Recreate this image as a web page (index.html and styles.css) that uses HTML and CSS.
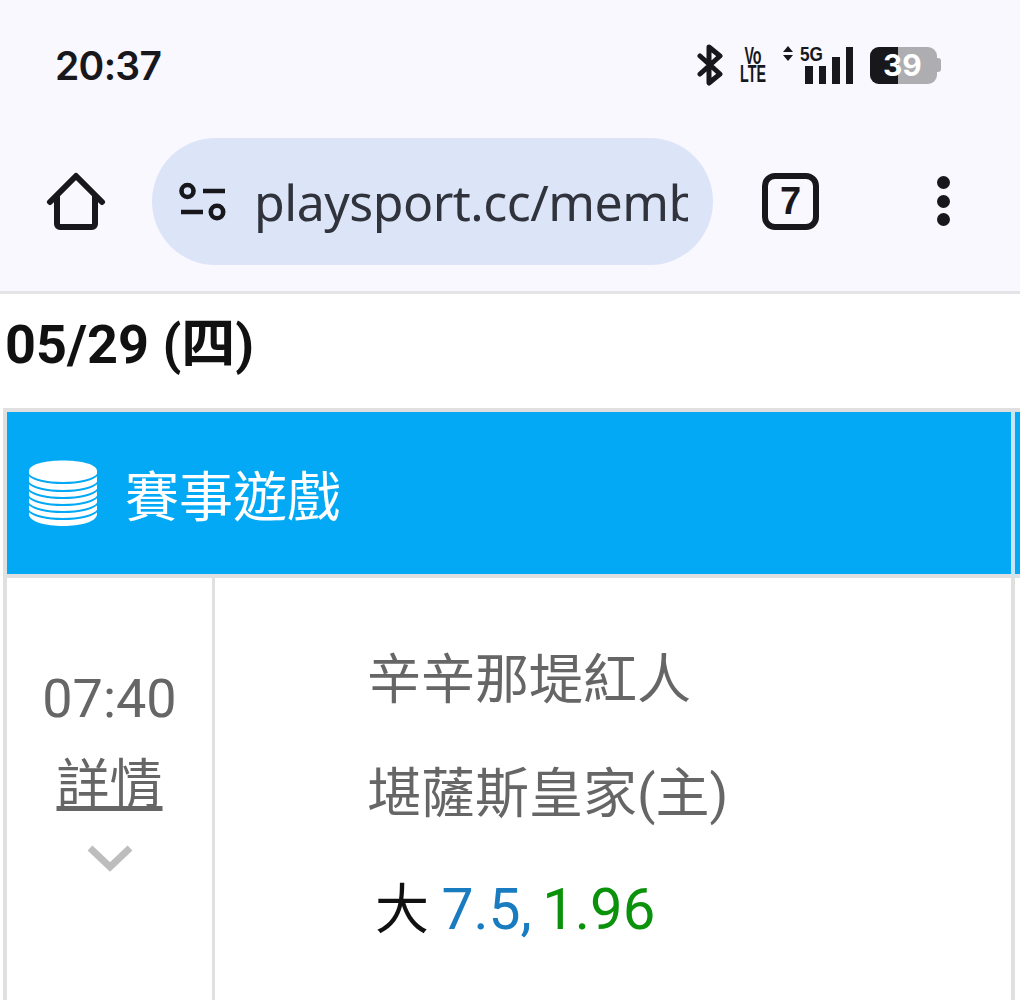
FILE: index.html
```html
<!DOCTYPE html>
<html lang="zh-Hant">
<head>
    <meta charset="UTF-8">
    <meta name="viewport" content="width=device-width, initial-scale=1.0">
    <title>playsport.cc</title>
    <link rel="stylesheet" href="styles.css">
</head>
<body>
    <div class="status-bar">
        <div class="clock">20:37</div>
        <div class="status-icons">
            <svg class="bt-icon" width="26" height="42" viewBox="0 0 26 42">
                <path d="M3 12 L23 30 L12 39 L12 3 L23 12 L3 30" fill="none" stroke="#17171c" stroke-width="5" stroke-linejoin="round" stroke-linecap="round"/>
            </svg>
            <div class="volte"><span>Vo</span><span>LTE</span></div>
            <div class="signal">
                <svg class="arrows" width="12" height="16" viewBox="0 0 12 16">
                    <path d="M6 0 L11 6 L1 6 Z M1 9 L11 9 L6 15 Z" fill="#17171c"/>
                </svg>
                <span class="five-g">5G</span>
                <div class="bars">
                    <i class="bar bar-1"></i>
                    <i class="bar bar-2"></i>
                    <i class="bar bar-3"></i>
                    <i class="bar bar-4"></i>
                </div>
            </div>
            <div class="battery">
                <div class="battery-body">
                    <div class="battery-fill"></div>
                    <span class="battery-text">39</span>
                </div>
                <div class="battery-tip"></div>
            </div>
        </div>
    </div>

    <div class="toolbar">
        <svg class="home-icon" width="60" height="60" viewBox="0 0 60 60">
            <path d="M4 31 L30 5 L56 31 M11 26 V53 a3 3 0 0 0 3 3 H46 a3 3 0 0 0 3 -3 V26" fill="none" stroke="#17171c" stroke-width="6" stroke-linejoin="round" stroke-linecap="round"/>
        </svg>
        <div class="url-pill">
            <svg class="tune-icon" width="48" height="40" viewBox="0 0 48 40">
                <circle cx="8.5" cy="9" r="6" fill="none" stroke="#17171c" stroke-width="4.6"/>
                <path d="M24 9 H46 M2 30 H24" stroke="#17171c" stroke-width="4.4"/>
                <circle cx="38" cy="30" r="6.2" fill="none" stroke="#17171c" stroke-width="4.6"/>
            </svg>
            <div class="url-text">playsport.cc/member</div>
        </div>
        <div class="tab-count">7</div>
        <div class="more-dots"><i></i><i></i><i></i></div>
    </div>

    <h1 class="date-title">05/29 (四)</h1>

    <div class="game-wrap">
        <div class="game-table">
            <div class="game-header">
                <svg class="coins-icon" width="70" height="66" viewBox="0 0 70 66">
                    <path d="M1 11 C1 -3 69 -3 69 11 V54 C69 70 1 70 1 54 Z" fill="#fff"/>
                    <path d="M0 14 C8 26 62 26 70 14 M0 22 C8 34 62 34 70 22 M0 29 C8 41 62 41 70 29 M0 36 C8 48 62 48 70 36 M0 43 C8 55 62 55 70 43 M0 50 C8 62 62 62 70 50" fill="none" stroke="#03a9f4" stroke-width="1.8"/>
                </svg>
                <span class="game-title">賽事遊戲</span>
            </div>
            <div class="game-row">
                <div class="time-cell">
                    <div class="game-time">07:40</div>
                    <a class="detail-link" href="#">詳情</a>
                    <svg class="chevron" width="46" height="28" viewBox="0 0 46 28">
                        <path d="M3 4 L23 23 L43 4" fill="none" stroke="#bdbdbd" stroke-width="7"/>
                    </svg>
                </div>
                <div class="info-cell">
                    <div class="team">辛辛那堤紅人</div>
                    <div class="team">堪薩斯皇家(主)</div>
                    <div class="bet-line">大 <span class="bet-num">7.5,</span> <span class="bet-odds">1.96</span></div>
                </div>
            </div>
        </div>
        <div class="next-table">
            <div class="next-header"></div>
        </div>
    </div>
</body>
</html>
```

FILE: styles.css
```css
html, body {
    margin: 0;
    padding: 0;
}
body {
    height: 1000px;
    overflow: hidden;
    background-color: #fff;
    font-family: Roboto, "Noto Sans CJK TC", sans-serif;
}
.status-bar {
    height: 130px;
    box-sizing: border-box;
    padding: 0 79px 0 55px;
    display: flex;
    align-items: center;
    justify-content: space-between;
    background-color: #f8f8fe;
}
.clock {
    font-family: Inter, Roboto, sans-serif;
    font-size: 39px;
    font-weight: 600;
    letter-spacing: -0.7px;
    color: #17171c;
}
.status-icons {
    display: flex;
    align-items: center;
}
.bt-icon {
    margin-right: 17px;
}
.volte {
    display: flex;
    flex-direction: column;
    align-items: center;
    width: 26px;
    margin-right: 17px;
    font-family: "Liberation Sans", sans-serif;
    font-size: 23px;
    font-weight: 700;
    line-height: 18px;
    color: #17171c;
    transform: scaleX(0.62);
}
.signal {
    display: flex;
    align-items: flex-end;
    position: relative;
    height: 38px;
    width: 70px;
    margin-right: 17px;
}
.arrows {
    position: absolute;
    left: -1px;
    top: 0;
}
.five-g {
    position: absolute;
    left: 17px;
    top: -4px;
    font-family: "Liberation Sans", sans-serif;
    font-size: 21px;
    font-weight: 700;
    color: #17171c;
    transform: scaleX(0.82);
    transform-origin: left;
}
.bars {
    display: flex;
    align-items: flex-end;
    gap: 6px;
    margin-left: 22px;
}
.bar {
    display: block;
    width: 7.5px;
    background-color: #17171c;
}
.bar-1 { height: 18px; }
.bar-2 { height: 18px; }
.bar-3 { height: 27px; }
.bar-4 { height: 37px; }
.battery {
    display: flex;
    align-items: center;
}
.battery-body {
    position: relative;
    width: 67px;
    height: 37px;
    border-radius: 9px;
    overflow: hidden;
    background-color: #aeaeb2;
}
.battery-fill {
    width: 28px;
    height: 100%;
    background-color: #17171c;
}
.battery-text {
    position: absolute;
    left: 13px;
    top: 0;
    font-family: Inter, Roboto, sans-serif;
    font-size: 30px;
    line-height: 37px;
    font-weight: 700;
    color: #fff;
}
.battery-tip {
    width: 4px;
    height: 14px;
    border-radius: 0 3px 3px 0;
    background-color: #aeaeb2;
}
.toolbar {
    height: 161px;
    box-sizing: border-box;
    padding: 8px 0 0 46px;
    display: flex;
    align-items: flex-start;
    background-color: #f8f8fe;
}
.home-icon {
    margin-top: 33px;
    flex: none;
}
.url-pill {
    width: 561px;
    height: 127px;
    box-sizing: border-box;
    margin-left: 46px;
    padding: 0 25px 0 27px;
    display: flex;
    align-items: center;
    gap: 27px;
    border-radius: 64px;
    background-color: #dce4f8;
    flex: none;
}
.tune-icon {
    flex: none;
}
.url-text {
    flex: 1;
    overflow: hidden;
    white-space: nowrap;
    font-family: "Noto Sans", Roboto, sans-serif;
    font-size: 50px;
    line-height: 64px;
    letter-spacing: -0.5px;
    color: #30333c;
}
.tab-count {
    width: 57px;
    height: 57px;
    box-sizing: border-box;
    margin: 35px 0 0 49px;
    border: 6px solid #17171c;
    border-radius: 13px;
    text-align: center;
    font-family: "Liberation Sans", sans-serif;
    font-size: 38px;
    font-weight: 700;
    line-height: 45px;
    color: #17171c;
    flex: none;
}
.more-dots {
    display: flex;
    flex-direction: column;
    gap: 5.5px;
    margin: 38px 0 0 118px;
}
.more-dots i {
    display: block;
    width: 13px;
    height: 13px;
    border-radius: 50%;
    background-color: #17171c;
}
.date-title {
    margin: 0;
    height: 117px;
    box-sizing: border-box;
    padding: 20px 0 0 5px;
    border-top: 3px solid #e4e4e6;
    font-size: 54px;
    font-weight: 700;
    line-height: 62px;
    color: #111;
}
.game-wrap {
    display: flex;
    padding-left: 3px;
}
.game-table {
    width: 1012px;
    box-sizing: border-box;
    border: 4px solid #e0e0e0;
    border-bottom: none;
    flex: none;
}
.game-header {
    height: 166px;
    box-sizing: border-box;
    margin-right: -4px;
    padding-left: 21px;
    display: flex;
    align-items: center;
    gap: 27px;
    background-color: #03a9f4;
    border-bottom: 4px solid #e0e0e0;
    border-right: 4px solid #c4e6f7;
}
.game-title {
    font-size: 54px;
    color: #fff;
}
.game-row {
    display: flex;
    height: 424px;
}
.time-cell {
    width: 208px;
    box-sizing: border-box;
    padding-top: 92px;
    border-right: 3px solid #e0e0e0;
    display: flex;
    flex-direction: column;
    align-items: center;
    color: #666;
    flex: none;
}
.game-time {
    font-size: 54px;
    line-height: 58px;
}
.detail-link {
    margin-top: 26px;
    font-size: 53px;
    line-height: 62px;
    color: #666;
    text-decoration: underline;
    text-decoration-thickness: 5px;
}
.chevron {
    margin-top: 28px;
}
.info-cell {
    padding: 68px 0 0 152px;
}
.team {
    height: 114px;
    font-size: 54px;
    line-height: 70px;
    color: #666;
}
.bet-line {
    font-size: 54px;
    line-height: 70px;
    color: #111;
    padding-left: 8px;
}
.bet-num {
    margin-left: -1px;
    font-size: 57px;
    color: #1a7cc0;
}
.bet-odds {
    margin-left: -3px;
    font-size: 58px;
    color: #0a930a;
}
.next-table {
    flex: 1;
    border-top: 4px solid #e0e0e0;
}
.next-header {
    height: 162px;
    background-color: #03a9f4;
    border-bottom: 4px solid #e0e0e0;
}
```
